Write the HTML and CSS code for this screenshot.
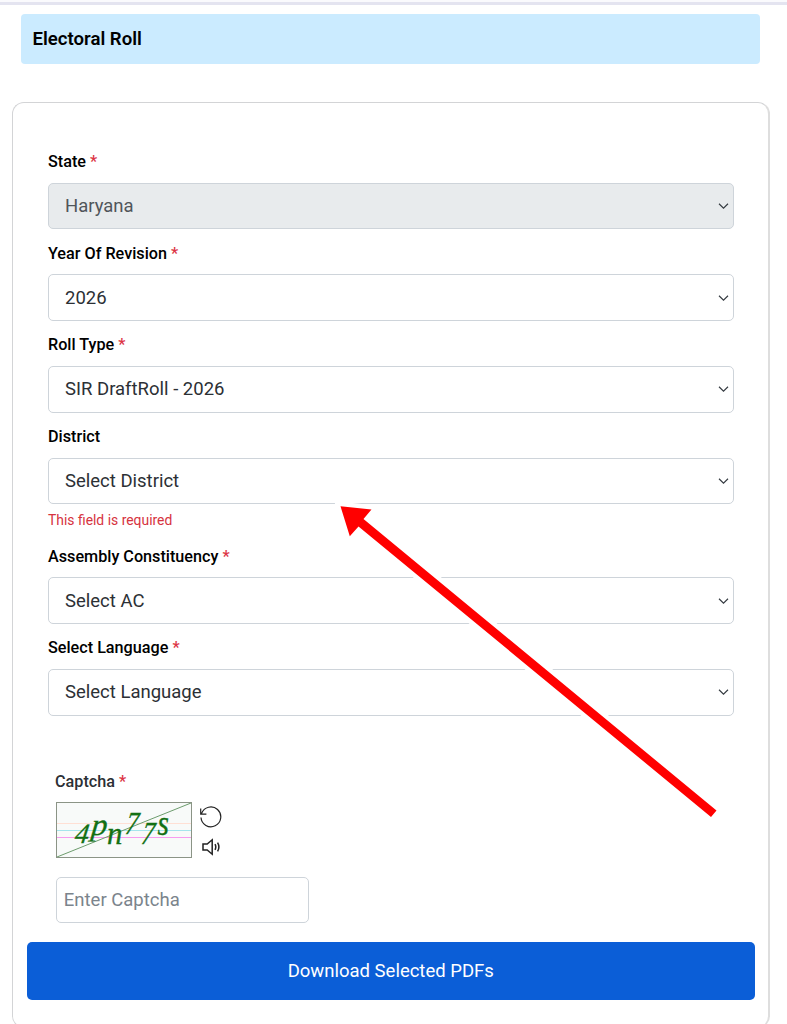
FILE: index.html
```html
<!DOCTYPE html>
<html lang="en">
<head>
  <meta charset="UTF-8">
  <meta name="viewport" content="width=device-width, initial-scale=1.0">
  <title>Electoral Roll</title>
  <link rel="stylesheet" href="styles.css">
</head>
<body>
  <h1 class="page-title">Electoral Roll</h1>

  <form class="roll-form">
    <div class="fields">
      <div class="field">
        <label for="state">State <span class="required">*</span></label>
        <div class="select-box">
          <select id="state" disabled><option>Haryana</option></select>
          <svg class="chevron" viewBox="0 0 16 16"><path d="M2 5l6 6 6-6"/></svg>
        </div>
      </div>
      <div class="field">
        <label for="year">Year Of Revision <span class="required">*</span></label>
        <div class="select-box">
          <select id="year"><option>2026</option></select>
          <svg class="chevron" viewBox="0 0 16 16"><path d="M2 5l6 6 6-6"/></svg>
        </div>
      </div>
      <div class="field">
        <label for="rollType">Roll Type <span class="required">*</span></label>
        <div class="select-box">
          <select id="rollType"><option>SIR DraftRoll - 2026</option></select>
          <svg class="chevron" viewBox="0 0 16 16"><path d="M2 5l6 6 6-6"/></svg>
        </div>
      </div>
      <div class="field">
        <label for="district">District</label>
        <div class="select-box">
          <select id="district"><option>Select District</option></select>
          <svg class="chevron" viewBox="0 0 16 16"><path d="M2 5l6 6 6-6"/></svg>
        </div>
        <p class="error">This field is required</p>
      </div>
      <div class="field">
        <label for="ac">Assembly Constituency <span class="required">*</span></label>
        <div class="select-box">
          <select id="ac"><option>Select AC</option></select>
          <svg class="chevron" viewBox="0 0 16 16"><path d="M2 5l6 6 6-6"/></svg>
        </div>
      </div>
      <div class="field">
        <label for="language">Select Language <span class="required">*</span></label>
        <div class="select-box">
          <select id="language"><option>Select Language</option></select>
          <svg class="chevron" viewBox="0 0 16 16"><path d="M2 5l6 6 6-6"/></svg>
        </div>
      </div>
    </div>

    <div class="captcha">
      <label for="captcha">Captcha <span class="required">*</span></label>
      <div class="captcha-row">
        <svg class="captcha-image" viewBox="0 0 136 56">
          <rect x="0.5" y="0.5" width="135" height="55" fill="#f8faf9"/>
          <path d="M1 21.5h134" stroke="#ffe0d5"/>
          <path d="M1 28.5h134" stroke="#a5e5ec"/>
          <path d="M1 35.5h134" stroke="#f79cf0"/>
          <path d="M1 55L135 1" stroke="#6d9c6d"/>
          <g class="captcha-text">
            <text transform="translate(18 41) skewX(-8)">4</text>
            <text transform="translate(34.5 33) skewX(-6) scale(1.15 1.1)">p</text>
            <text transform="translate(51 41.5) scale(1.1 1.15)">n</text>
            <text transform="translate(68.5 32) skewX(-8) scale(0.9 1.15)">7</text>
            <text transform="translate(84.5 42) skewX(-8) scale(0.9 1.15)">7</text>
            <text transform="translate(101.5 33) scale(1.05 1.25)">s</text>
          </g>
          <rect x="0.5" y="0.5" width="135" height="55" fill="none" stroke="#8b9486"/>
        </svg>
        <div class="captcha-actions">
          <svg class="icon-refresh" viewBox="0 0 22 22"><path d="M1.6 7.4A9.9 9.9 0 1 1 1 11.5M0.7 2.6v5.6h5.7"/></svg>
          <svg class="icon-sound" viewBox="0 0 20 18"><path d="M2 6h4.2l5-4.2v14.4l-5-4.2H2z"/><path d="M14 6.2q1.6 2.8 0 5.6M16.6 4.6q2.6 4.4 0 8.8"/></svg>
        </div>
      </div>
      <input id="captcha" type="text" placeholder="Enter Captcha">
    </div>

    <button type="button" class="download">Download Selected PDFs</button>
  </form>

  <!-- pointer to the district field -->
  <svg class="arrow" viewBox="0 0 787 1024">
    <path class="halo" d="M340.5 506.3L371.5 509.5 363.5 519 716.5 810.5 711 817 358.5 526.5 349.8 536.3z"/>
    <path d="M340.5 506.3L371.5 509.5 363.5 519 716.5 810.5 711 817 358.5 526.5 349.8 536.3z"/>
  </svg>
</body>
</html>
```

FILE: styles.css
```css
* {
  box-sizing: border-box;
}
body {
  font-family: Roboto, "Liberation Sans", sans-serif;
  margin: 0;
  height: 1024px;
  overflow: hidden;
  background-color: #fff;
  border-top: 2px solid #fafafd;
  position: relative;
}
body::before {
  content: "";
  display: block;
  height: 3px;
  background-color: #e4e4f0;
}
.page-title {
  margin: 9.4px 27px 0 21px;
  height: 50px;
  padding-left: 11.5px;
  line-height: 51.5px;
  font-size: 18.6px;
  font-weight: 600;
  color: #000;
  background-color: #cbebff;
  border-radius: 4px;
}
.roll-form {
  margin: 37.4px 17.5px 0 12px;
  height: 926px;
  padding: 46px 13px 0 14px;
  border: 1px solid #d3d4d6;
  border-right: 2px solid #dedede;
  border-radius: 12px;
}
.fields {
  padding: 0 20.8px 0 21px;
}
.field {
  height: 91.7px;
}
.field:has(.error) {
  height: 119.6px;
}
label {
  display: block;
  line-height: 24px;
  padding: 1.2px 0 8.8px;
  font-size: 16.2px;
  font-weight: 500;
  color: #000;
}
.required {
  color: #dc3545;
}
.select-box {
  display: grid;
  align-items: center;
}
select {
  grid-area: 1 / 1;
  appearance: none;
  width: 100%;
  height: 46.5px;
  padding: 0 16px;
  font: 400 18.5px Roboto, "Liberation Sans", sans-serif;
  color: #2c3035;
  background-color: #fff;
  border: 1px solid #ced4da;
  border-radius: 5px;
}
select:disabled {
  color: #50555a;
  background-color: #e8ebed;
  opacity: 1;
}
.chevron {
  grid-area: 1 / 1;
  justify-self: end;
  width: 13px;
  height: 12px;
  margin-right: 4px;
  fill: none;
  stroke: #343a40;
  stroke-width: 1.5;
  pointer-events: none;
}
.error {
  margin: 5px 0 0;
  font-size: 13.9px;
  line-height: 22px;
  color: #d63340;
}
.captcha {
  padding: 41.5px 28px 0;
}
.captcha label {
  padding-bottom: 8.5px;
  color: #2c3035;
}
.captcha-row {
  display: flex;
  gap: 8px;
  padding-left: 0.5px;
}
.captcha-image {
  width: 136px;
  height: 56px;
}
.captcha-text {
  font: italic 28px "Liberation Serif", serif;
  fill: #137013;
  stroke: #137013;
  stroke-width: 0.3;
}
.captcha-actions {
  display: flex;
  flex-direction: column;
  gap: 10px;
  padding-top: 4px;
}
.captcha-actions svg {
  fill: none;
  stroke: #222;
}
.icon-refresh {
  width: 22px;
  height: 22px;
  stroke-width: 1.2;
}
.icon-sound {
  width: 20px;
  height: 18px;
  stroke-width: 1.5;
  margin-left: 1px;
}
.captcha input {
  display: block;
  width: 253px;
  height: 46px;
  margin: 19px 0 0 0.8px;
  padding: 0 7px;
  font: 400 18.5px Roboto, "Liberation Sans", sans-serif;
  border: 1px solid #ced4da;
  border-radius: 5px;
}
.captcha input::placeholder {
  color: #7b848c;
}
.download {
  display: block;
  width: 727.5px;
  height: 58px;
  margin-top: 18.5px;
  font: 400 18.5px Roboto, "Liberation Sans", sans-serif;
  color: #fff;
  background-color: #0b5ed7;
  border: none;
  border-radius: 5px;
}
.arrow {
  position: absolute;
  top: -2px;
  left: 0;
  width: 787px;
  height: 1024px;
  fill: #f00;
  pointer-events: none;
}
.arrow .halo {
  fill: #fff;
  stroke: #fff;
  stroke-width: 9;
}
```
